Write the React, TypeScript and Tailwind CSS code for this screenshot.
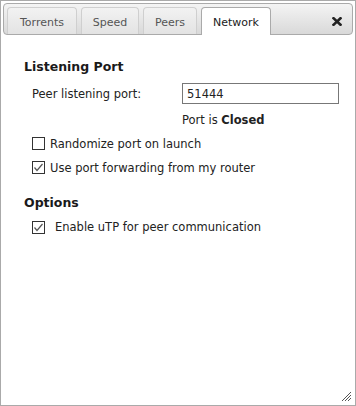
import React from "react";

const font = { fontFamily: '"DejaVu Sans", Verdana, sans-serif' };

function Check({ checked }: { checked: boolean }) {
  return (
    <svg width="13" height="13" viewBox="0 0 13 13" className="shrink-0">
      <rect x="0.5" y="0.5" width="12" height="12" fill="#fff" stroke="#333" />
      {checked && (
        <path d="M2.5 6.5 L5 9.5 L10.5 3" fill="none" stroke="#555" strokeWidth="1.2" />
      )}
    </svg>
  );
}

export default function App() {
  const tabs = [
    { label: "Torrents", w: "w-[70px]" },
    { label: "Speed", w: "w-[58px]" },
    { label: "Peers", w: "w-[54px]" },
  ];
  return (
    <div
      className="relative w-[356px] h-[406px] border border-[#aaaaaa] bg-white p-[2px] text-[11.5px] text-[#222]"
      style={font}
    >
      <div className="relative h-[32px] border border-[#aaaaaa] rounded-[4px] bg-gradient-to-b from-[#f4f4f4] to-[#d9d9d9] flex items-start gap-[4px] pl-[3px] pt-[3px]">
        {tabs.map((t) => (
          <div
            key={t.label}
            className={`${t.w} h-[27px] border border-b-0 border-[#cfcfcf] rounded-t-[4px] bg-gradient-to-b from-[#f2f2f2] to-[#e3e3e3] flex items-center justify-center pt-[4px] text-[11px] text-[#555]`}
          >
            {t.label}
          </div>
        ))}
        <div className="w-[70px] h-[28px] border border-b-0 border-[#aaaaaa] rounded-t-[4px] bg-white flex items-center justify-center pt-[3px] text-[11px] text-[#212121]">
          Network
        </div>
        <svg
          width="10"
          height="9"
          viewBox="0 0 10 9"
          className="absolute right-[10px] top-[13px]"
        >
          <path d="M1.5 1.2 L8.5 7.8 M8.5 1.2 L1.5 7.8" stroke="#222" strokeWidth="2.6" strokeLinecap="square" />
        </svg>
      </div>

      <div className="pl-[21px] pt-[24px]">
        <div className="text-[12.5px] font-bold leading-[16px] text-[#1a1a1a]">Listening Port</div>

        <div className="mt-[8px] pl-[8px] flex items-center">
          <div className="w-[150px] leading-[14px]">Peer listening port:</div>
          <div className="w-[157px] h-[21px] border border-[#777] flex items-center pl-[4px] leading-[14px]">
            51444
          </div>
        </div>

        <div className="mt-[9px] pl-[158px] leading-[14px]">
          Port is <span className="font-bold">Closed</span>
        </div>

        <div className="mt-[8px] pl-[8px] flex items-center h-[16px] gap-[5px]">
          <Check checked={false} />
          <span className="leading-[14px] pt-[2px]">Randomize port on launch</span>
        </div>

        <div className="mt-[8px] pl-[8px] flex items-center h-[16px] gap-[5px]">
          <Check checked={true} />
          <span className="leading-[14px] pt-[2px]">Use port forwarding from my router</span>
        </div>

        <div className="mt-[20px] text-[12.5px] font-bold leading-[16px] text-[#1a1a1a]">Options</div>

        <div className="mt-[8px] pl-[8px] flex items-center h-[16px] gap-[10px]">
          <Check checked={true} />
          <span className="leading-[14px]">Enable uTP for peer communication</span>
        </div>
      </div>

      <svg width="12" height="12" viewBox="0 0 12 12" className="absolute right-[3px] bottom-[3px]">
        <path d="M11 2 L2 11 M11 5 L5 11 M11 8 L8 11" stroke="#555" strokeWidth="1" />
      </svg>
    </div>
  );
}
